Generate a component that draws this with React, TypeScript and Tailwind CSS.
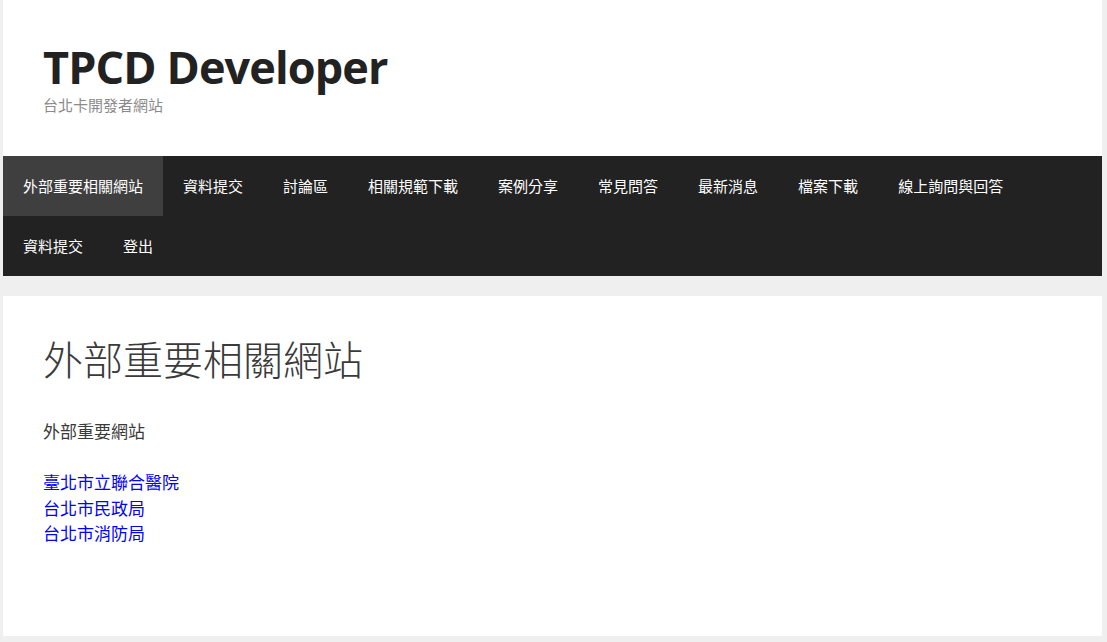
const navItems = [
  "外部重要相關網站",
  "資料提交",
  "討論區",
  "相關規範下載",
  "案例分享",
  "常見問答",
  "最新消息",
  "檔案下載",
  "線上詢問與回答",
  "資料提交",
  "登出",
];

const links = ["臺北市立聯合醫院", "台北市民政局", "台北市消防局"];

const cjk = "font-['Open_Sans','Noto_Sans_CJK_TC',sans-serif]";

export default function App() {
  return (
    <div className={`min-h-[642px] bg-[#efefef] ${cjk}`}>
      <div className="ml-[3px] w-[1099px]">
        <header className="bg-white p-[40px]">
          <p className="text-[45px] font-bold leading-[1.2] tracking-[-0.9px] text-[#222222]">
            TPCD Developer
          </p>
          <p className="text-[15px] leading-[22px] text-[#8a8a8a]">
            台北卡開發者網站
          </p>
        </header>
        <nav className="flex flex-wrap bg-[#222222]">
          {navItems.map((item, i) => (
            <a
              key={i}
              className={`px-[20px] text-[15px] leading-[60px] text-white ${
                i === 0 ? "bg-[#3f3f3f]" : ""
              }`}
            >
              {item}
            </a>
          ))}
        </nav>
        <main className="mt-[20px] min-h-[340px] bg-white p-[40px]">
          <h1 className="mb-[35px] text-[40px] font-light leading-[1.2] text-[#3a3a3a]">
            外部重要相關網站
          </h1>
          <div className="text-[17px] leading-[1.5] text-[#3a3a3a]">
            <p>外部重要網站</p>
            <br />
            {links.map((link) => (
              <a key={link} className="block text-[#0000ff]">
                {link}
              </a>
            ))}
          </div>
        </main>
      </div>
    </div>
  );
}
